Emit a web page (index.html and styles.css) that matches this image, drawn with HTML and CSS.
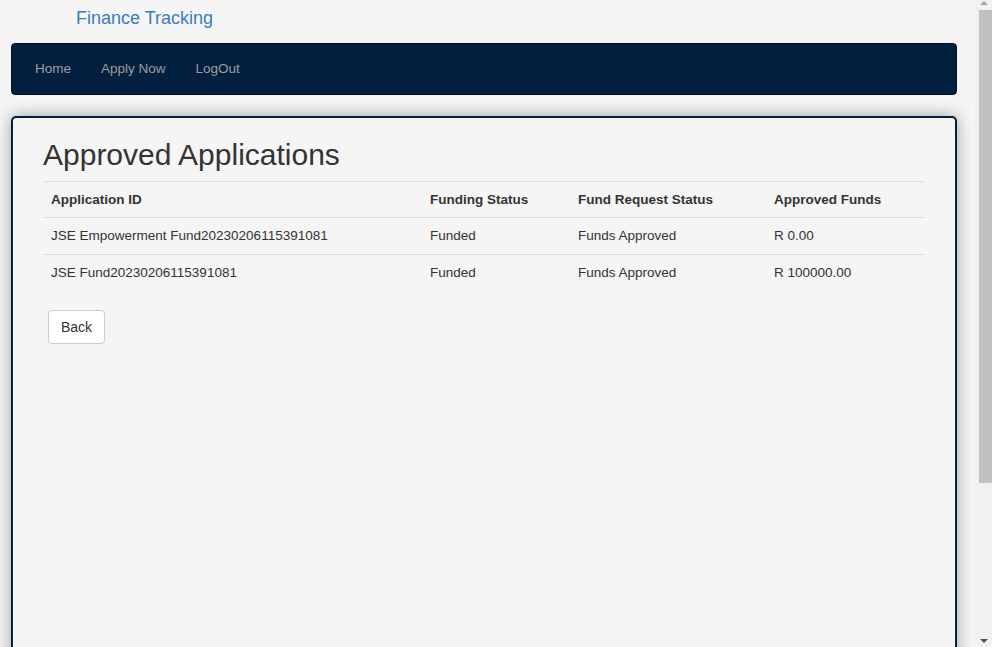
FILE: index.html
```html
<!DOCTYPE html>
<html lang="en">
<head>
<meta charset="utf-8">
<title>Approved Applications</title>
<link rel="stylesheet" href="styles.css">
</head>
<body>
<header class="brand-bar">
  <a class="brand" href="#">Finance Tracking</a>
</header>
<nav class="navbar">
  <ul class="nav-links">
    <li><a href="#">Home</a></li>
    <li><a href="#">Apply Now</a></li>
    <li><a href="#">LogOut</a></li>
  </ul>
</nav>
<main class="panel">
  <h2 class="title">Approved Applications</h2>
  <table class="apps">
    <thead>
      <tr>
        <th class="c-id">Application ID</th>
        <th class="c-fs">Funding Status</th>
        <th class="c-rs">Fund Request Status</th>
        <th class="c-af">Approved Funds</th>
      </tr>
    </thead>
    <tbody>
      <tr>
        <td>JSE Empowerment Fund20230206115391081</td>
        <td>Funded</td>
        <td>Funds Approved</td>
        <td>R 0.00</td>
      </tr>
      <tr>
        <td>JSE Fund20230206115391081</td>
        <td>Funded</td>
        <td>Funds Approved</td>
        <td>R 100000.00</td>
      </tr>
    </tbody>
  </table>
  <button class="btn" type="button">Back</button>
</main>
<div class="scrollbar" aria-hidden="true">
  <span class="arrow-up"></span>
  <span class="thumb"></span>
  <span class="arrow-down"></span>
</div>
</body>
</html>
```

FILE: styles.css
```css
html, body {
  margin: 0;
  padding: 0;
}
body {
  background: #f5f5f5;
  font-family: "Liberation Sans", Arial, Helvetica, sans-serif;
  font-size: 13.5px;
  line-height: 20px;
  color: #333;
}
.brand-bar {
  height: 43px;
  box-sizing: border-box;
  padding: 8px 0 0 76px;
}
.brand {
  font-size: 18px;
  line-height: 20px;
  color: #3a7cbf;
  text-decoration: none;
}
.navbar {
  margin: 0 0 21px 11px;
  width: 946px;
  box-sizing: border-box;
  height: 52px;
  background: #01203f;
  border: 1px solid #0a0f17;
  border-radius: 4px;
}
.nav-links {
  list-style: none;
  margin: 0;
  padding: 0 0 0 8px;
  display: flex;
}
.nav-links a {
  display: block;
  padding: 15px;
  color: #9d9d9d;
  text-decoration: none;
}
.panel {
  display: block;
  margin: 0 0 24px 11px;
  width: 946px;
  min-height: 700px;
  box-sizing: border-box;
  border: 2px solid #01203f;
  border-radius: 5px;
  background: #f5f5f5;
  box-shadow: 0 0 16px rgba(0, 0, 0, 0.35);
  padding: 20px 30px 20px;
}
.title {
  margin: 0 0 10px;
  font-size: 30px;
  line-height: 33px;
  font-weight: 500;
  color: #333;
}
.apps {
  width: 100%;
  border-collapse: collapse;
  margin-bottom: 19px;
}
.apps th, .apps td {
  text-align: left;
  padding: 8px;
  line-height: 20px;
  border-top: 1px solid #ddd;
  vertical-align: top;
}
.apps th {
  font-weight: bold;
  padding-bottom: 7px;
}
.c-id { width: 363px; }
.c-fs { width: 132px; }
.c-rs { width: 180px; }
.btn {
  margin-left: 5px;
  font-family: inherit;
  font-size: 14px;
  line-height: 20px;
  padding: 6px 12px;
  color: #333;
  background: #fff;
  border: 1px solid #ccc;
  border-radius: 4px;
}
.scrollbar {
  position: fixed;
  top: 0;
  right: 0;
  width: 17px;
  height: 100%;
  background: #f1f1f1;
}
.thumb {
  position: absolute;
  top: 10px;
  left: 4px;
  right: 0;
  height: 473px;
  background: #c1c1c1;
}
.arrow-up, .arrow-down {
  position: absolute;
  left: 5px;
  width: 0;
  height: 0;
  border-left: 4px solid transparent;
  border-right: 4px solid transparent;
}
.arrow-up {
  top: 1px;
  border-bottom: 4px solid #a3a3a3;
}
.arrow-down {
  bottom: 4px;
  border-top: 4px solid #505050;
}
```
